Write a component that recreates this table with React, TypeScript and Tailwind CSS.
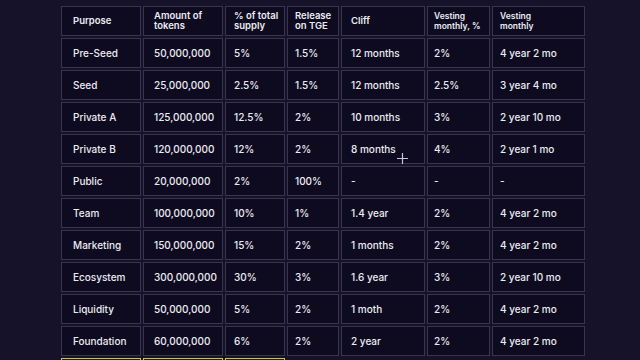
import React from 'react';

const cols = [
  { w: 'w-[80px]', pl: 'pl-[11px]' },
  { w: 'w-[80px]', pl: 'pl-[10px]' },
  { w: 'w-[60px]', pl: 'pl-[8px]' },
  { w: 'w-[52px]', pl: 'pl-[7px]' },
  { w: 'w-[84px]', pl: 'pl-[9px]' },
  { w: 'w-[63px]', pl: 'pl-[6px]' },
  { w: 'w-[93px]', pl: 'pl-[7px]' },
];

const header = [
  'Purpose',
  'Amount of tokens',
  '% of total supply',
  'Release on TGE',
  'Cliff',
  'Vesting monthly, %',
  'Vesting monthly',
];

// wrap widths so headers break like the design
const headSpan = ['', 'w-[50px]', 'w-[46px]', 'w-[38px]', '', 'w-[54px]', 'w-[40px]'];

const rows = [
  ['Pre-Seed', '50,000,000', '5%', '1.5%', '12 months', '2%', '4 year 2 mo'],
  ['Seed', '25,000,000', '2.5%', '1.5%', '12 months', '2.5%', '3 year 4 mo'],
  ['Private A', '125,000,000', '12.5%', '2%', '10 months', '3%', '2 year 10 mo'],
  ['Private B', '120,000,000', '12%', '2%', '8 months', '4%', '2 year 1 mo'],
  ['Public', '20,000,000', '2%', '100%', '-', '-', '-'],
  ['Team', '100,000,000', '10%', '1%', '1.4 year', '2%', '4 year 2 mo'],
  ['Marketing', '150,000,000', '15%', '2%', '1 months', '2%', '4 year 2 mo'],
  ['Ecosystem', '300,000,000', '30%', '3%', '1.6 year', '3%', '2 year 10 mo'],
  ['Liquidity', '50,000,000', '5%', '2%', '1 moth', '2%', '4 year 2 mo'],
  ['Foundation', '60,000,000', '6%', '2%', '2 year', '2%', '4 year 2 mo'],
];

const font = { fontFamily: 'Inter, "Noto Sans", sans-serif' };

export default function App() {
  return (
    <div
      className="relative h-[360px] w-[640px] overflow-hidden bg-[#15122a] text-[#ecebf2]"
      style={font}
    >
      <div className="flex flex-col gap-[2px] pl-[61px] pt-[6px]">
        {/* header */}
        <div className="flex gap-[2px]">
          {header.map((h, i) => (
            <div
              key={h}
              className={`${cols[i].w} ${cols[i].pl} flex h-[30px] items-center border border-[#38354f] bg-[#0e0b21] pr-1 font-semibold leading-[10px] ${
                i >= 5 ? 'text-[8.5px]' : 'text-[9.5px]'
              }`}
            >
              <span className={headSpan[i]}>{h}</span>
            </div>
          ))}
        </div>

        {rows.map((r) => (
          <div key={r[0]} className="flex gap-[2px]">
            {r.map((c, i) => (
              <div
                key={i}
                className={`${cols[i].w} ${cols[i].pl} flex h-[30px] items-center border border-[#38354f] bg-[#0e0b21] text-[10px] font-medium whitespace-nowrap`}
              >
                {c}
              </div>
            ))}
          </div>
        ))}

        {/* highlighted row, only its top edge shows */}
        <div className="flex gap-[2px]">
          {[0, 1, 2].map((i) => (
            <div key={i} className={`${cols[i].w} h-[30px] border border-[#c8bd74] bg-[#1d1b22]`} />
          ))}
        </div>
      </div>

      {/* cursor */}
      <svg className="absolute left-[397px] top-[153px] h-[11px] w-[11px]" viewBox="0 0 11 11">
        <path d="M5.5 0v11M0 5.5h11" stroke="#c9c6d4" strokeWidth="1.2" />
      </svg>
    </div>
  );
}
